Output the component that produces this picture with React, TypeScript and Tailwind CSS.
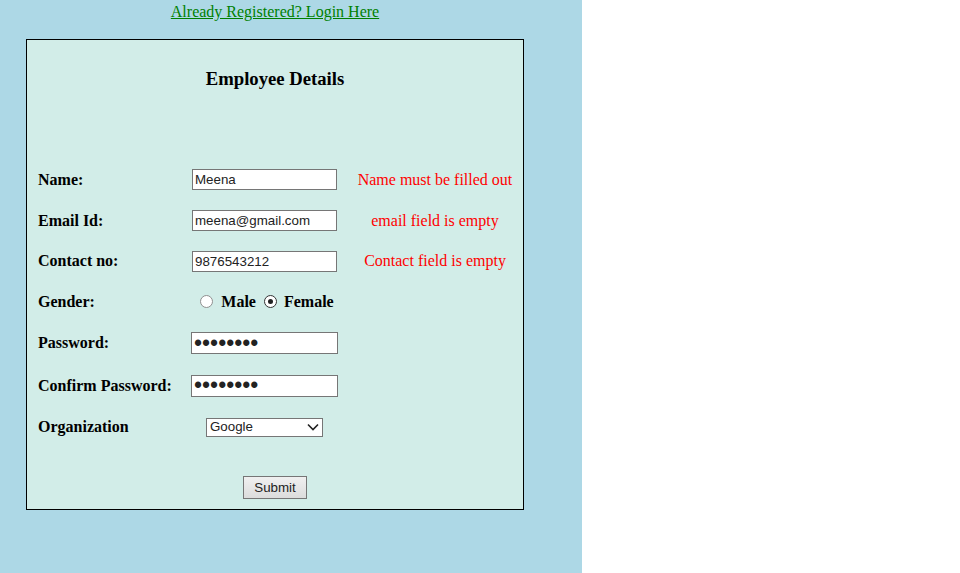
import React from 'react';

const serif = "font-['Liberation_Serif',serif]";
const sans = "font-['Liberation_Sans',Arial,sans-serif]";

type RowProps = {
  label: string;
  h: string;
  children: React.ReactNode;
  error?: string;
};

const Row: React.FC<RowProps> = ({ label, h, children, error }) => {
  return (
    <>
      <div className={`${h} flex items-center font-bold text-[16px]`}>{label}</div>
      <div className={`${h} flex items-center justify-center`}>{children}</div>
      <div className={`${h} flex items-center justify-center pl-[9px] text-[16px] text-[#ff0000]`}>
        {error}
      </div>
    </>
  );
};

const TextBox = ({ value }: { value: string }) => (
  <input
    type="text"
    defaultValue={value}
    className={`${sans} w-[145px] h-[21px] bg-white border border-[#767676] px-[2px] text-[13.33px] text-[#222] outline-none`}
  />
);

// password boxes are a touch bigger and show large dots
const PassBox = () => (
  <input
    type="password"
    defaultValue="12345678"
    className={`${sans} w-[147px] h-[22px] bg-white border border-[#767676] px-[2px] text-[23px] leading-[20px] text-[#222] outline-none`}
  />
);

const Radio = ({ checked }: { checked?: boolean }) => (
  <span
    className={`inline-flex w-[13px] h-[13px] rounded-full bg-white items-center justify-center border ${
      checked ? 'border-[#333]' : 'border-[#8f8f8f]'
    }`}
  >
    {checked && <span className="w-[5px] h-[5px] rounded-full bg-[#222]" />}
  </span>
);

export default function App() {
  return (
    <div className={`${serif} flex w-[960px] h-[573px] bg-white text-black`}>
      <div className="w-[582px] h-[573px] bg-[#add8e6]">
        <div className="w-[550px] flex flex-col items-center">
          <a href="#" className="mt-[2px] text-[16px] leading-[19px] text-[#008000] underline">
            Already Registered? Login Here
          </a>
          <div className="mt-[18px] w-[498px] h-[471px] border border-black bg-[#d2ede8] flex flex-col">
            <h3 className="mt-[28px] h-[22px] leading-[22px] text-center font-bold text-[18.7px]">
              Employee Details
            </h3>
            <div className="mt-[69px] ml-[11px] grid grid-cols-[150px_153px_179px]">
              <Row label="Name:" h="h-[41px]" error="Name must be filled out">
                <TextBox value="Meena" />
              </Row>
              <Row label="Email Id:" h="h-[41px]" error="email field is empty">
                <TextBox value="meena@gmail.com" />
              </Row>
              <Row label="Contact no:" h="h-[40px]" error="Contact field is empty">
                <TextBox value="9876543212" />
              </Row>
              <Row label="Gender:" h="h-[41px]">
                <div className="flex items-center font-bold text-[16px] ml-[5px]">
                  <Radio />
                  <span className="ml-[8px]">Male</span>
                  <span className="ml-[8px] flex"><Radio checked /></span>
                  <span className="ml-[7px]">Female</span>
                </div>
              </Row>
              <Row label="Password:" h="h-[42px]">
                <PassBox />
              </Row>
              <Row label="Confirm Password:" h="h-[43px]">
                <PassBox />
              </Row>
              <Row label="Organization" h="h-[40px]">
                <div
                  className={`${sans} w-[117px] h-[19px] bg-white border border-[#767676] flex items-center justify-between pl-[3px] pr-[3px] text-[13.33px] text-[#222]`}
                >
                  <span>Google</span>
                  <svg width="12" height="8" viewBox="0 0 12 8" fill="none">
                    <path d="M1 1.5 L6 6.5 L11 1.5" stroke="#222" strokeWidth="1.6" />
                  </svg>
                </div>
              </Row>
            </div>
            <div className="mt-[29px] flex justify-center">
              <button
                className={`${sans} w-[64px] h-[23px] border border-[#767676] bg-gradient-to-b from-[#f0f0f0] to-[#dcdcdc] text-[13.33px] text-[#222]`}
              >
                Submit
              </button>
            </div>
          </div>
        </div>
      </div>
    </div>
  );
}
